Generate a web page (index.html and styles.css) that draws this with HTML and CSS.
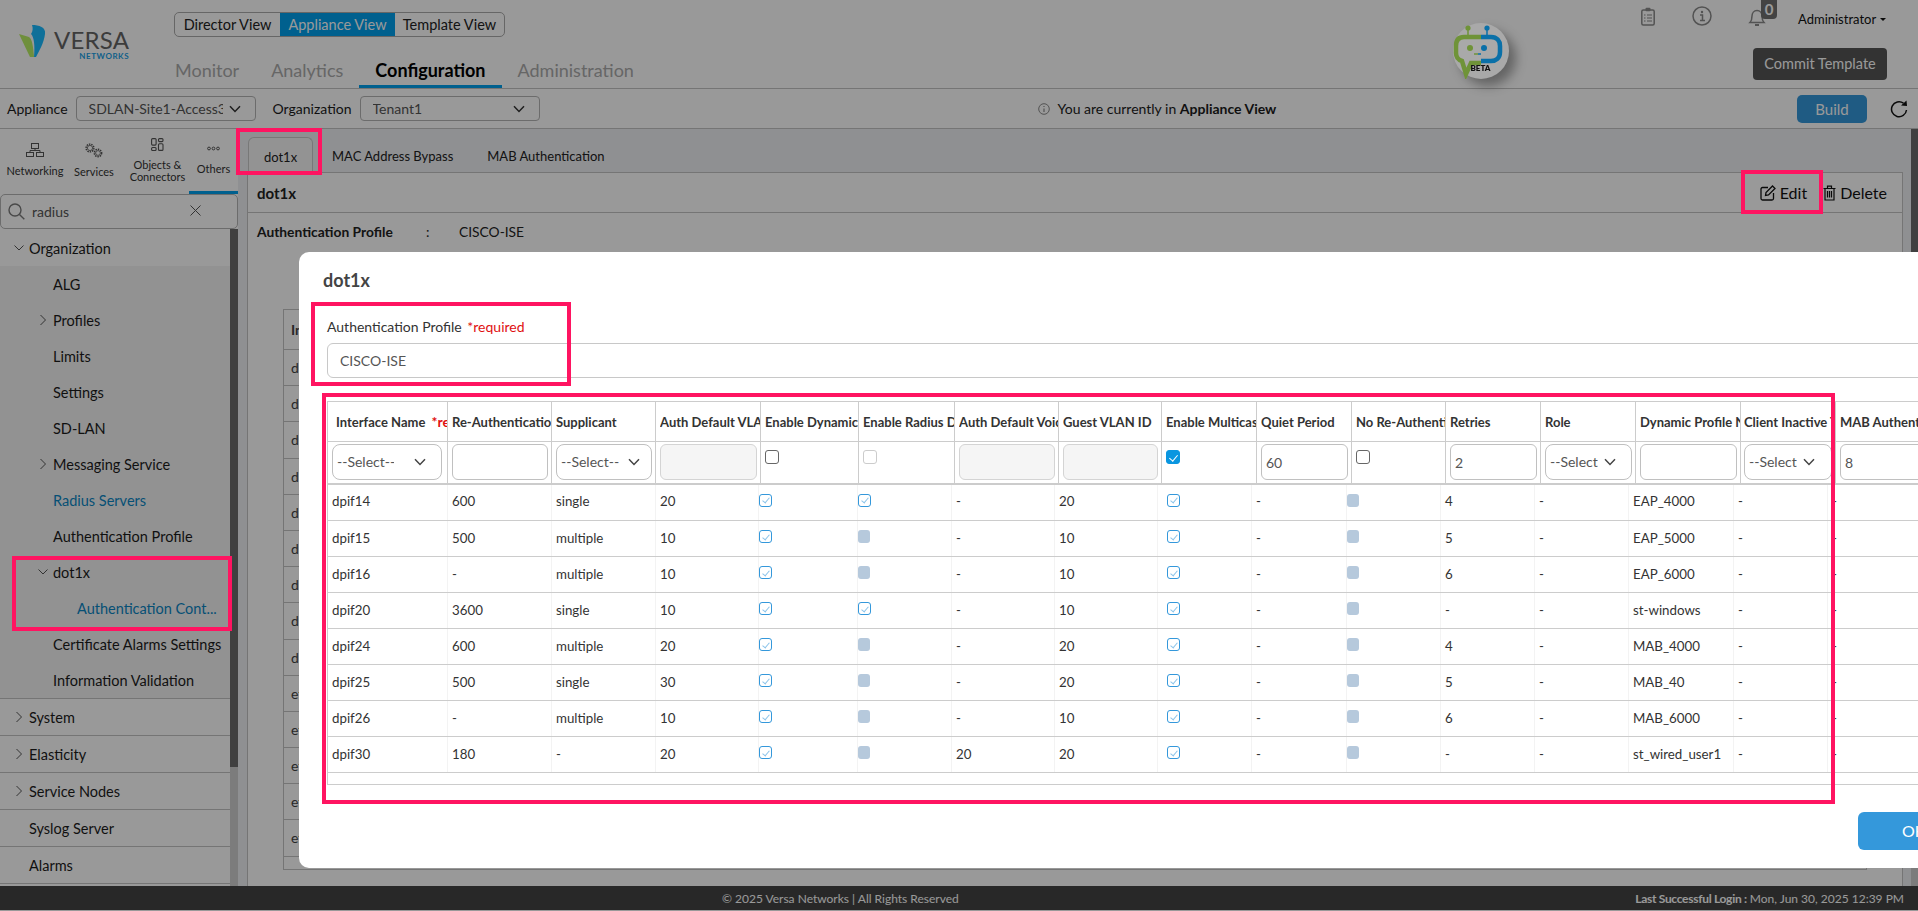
FILE: index.html
```html
<!DOCTYPE html>
<html lang="en">
<head>
<meta charset="utf-8">
<title>Versa Director - dot1x</title>
<link rel="stylesheet" href="styles.css">
</head>
<body>
<svg class="defs" width="0" height="0">
  <symbol id="chev-d" viewBox="0 0 10 6"><path d="M.5.5 5 5 9.5.5" fill="none" stroke="currentColor" stroke-width="1"/></symbol>
  <symbol id="chev-r" viewBox="0 0 10 12"><path d="M2.5 1 7.5 6l-5 5" fill="none" stroke="currentColor" stroke-width="1"/></symbol>
  <symbol id="chev-s" viewBox="0 0 12 8"><path d="M1 1.2 6 6.4l5-5.2" fill="none" stroke="currentColor" stroke-width="1.5"/></symbol>
</svg>
<div class="app">
  <header class="header">
    <div class="brand">
      <svg class="logo-mark" width="28" height="33" viewBox="0 0 28 33"><path d="M0 9 10 12C13 14 14 20 15 32L11 32Z" fill="#b9ee64"/><path d="M13 0C20 0 27 2 26 9 25 18 20 26 17 32L15 32C16 20 15 12 12 9 14 6 14 3 13 0Z" fill="#1abbff"/></svg>
      <div class="logo-text"><span class="logo-versa">VERSA</span><span class="logo-net">NETWORKS</span></div>
    </div>
    <div class="nav">
      <div class="views">
        <span class="view view-a">Director View</span>
        <span class="view view-b active">Appliance View</span>
        <span class="view view-c">Template View</span>
      </div>
      <div class="tabs">
        <span class="tab first">Monitor</span>
        <span class="tab">Analytics</span>
        <span class="tab active">Configuration</span>
        <span class="tab">Administration</span>
      </div>
    </div>
    <div class="bot">
      <svg width="56" height="56" viewBox="0 0 56 56">
        <path d="M15 5V14" stroke="#6f9338" stroke-width="1.5"/>
        <path d="M34 5V14" stroke="#0a70a8" stroke-width="1.5"/>
        <circle cx="15" cy="5" r="2.6" fill="#6f9338"/><circle cx="34" cy="5" r="2.6" fill="#0a70a8"/>
        <path d="M28 14H11C5 14 3 18 3 23V30C3 35 6 37 9 38L13 51 18 40H28" fill="none" stroke="#6f9338" stroke-width="4.5"/>
        <path d="M28 14H38C44 14 47 18 47 23V29C47 35 43 38 38 38H28" fill="none" stroke="#0a70a8" stroke-width="4.5"/>
        <circle cx="17" cy="25" r="3" fill="#6f9338"/><circle cx="31" cy="25" r="3" fill="#0a70a8"/>
        <path d="M21 31H25" stroke="#6f9338" stroke-width="1.5"/><path d="M25 31H28" stroke="#0a70a8" stroke-width="1.5"/>
        <text x="17.500" y="48" class="beta">BETA</text>
      </svg>
    </div>
    <div class="user">
      <div class="user-top">
        <svg class="ico-clip" width="14" height="19" viewBox="0 0 14 19"><rect x=".8" y="3" width="12.400" height="15" rx="1.500" fill="none" stroke="#8a8a8a" stroke-width="1.500"/><rect x="4.500" y=".8" width="5" height="3.500" rx="1" fill="#8a8a8a"/><path d="M3 8h1.500M6 8h5M3 11h1.500M6 11h5M3 14h1.500M6 14h5" stroke="#8a8a8a" stroke-width="1.200"/></svg>
        <svg class="ico-info" width="20" height="20" viewBox="0 0 20 20"><circle cx="10" cy="10" r="9" fill="none" stroke="#8a8a8a" stroke-width="1.500"/><circle cx="10" cy="6" r="1.200" fill="#8a8a8a"/><path d="M8 9h2.500v5M8 14.500h5" fill="none" stroke="#8a8a8a" stroke-width="1.500"/></svg>
        <span class="bell-wrap">
          <svg width="18" height="19" viewBox="0 0 18 19"><path d="M2 14.500h14C14.500 13 14 11 14 8c0-3-2-5.500-5-5.500S4 5 4 8c0 3-.5 5-2 6.500Z" fill="none" stroke="#8a8a8a" stroke-width="1.500"/><path d="M7 17h4" stroke="#8a8a8a" stroke-width="2"/></svg>
          <span class="badge">0</span>
        </span>
        <span class="admin">Administrator<i class="caret-down"></i></span>
      </div>
      <span class="commit">Commit Template</span>
    </div>
  </header>

  <div class="toolbar">
    <label class="tb-label">Appliance</label>
    <div class="tb-select tb-sel-a"><span class="tb-val">SDLAN-Site1-Access3</span><svg width="12" height="8"><use href="#chev-s"/></svg></div>
    <label class="tb-label tb-org">Organization</label>
    <div class="tb-select tb-sel-b"><span class="tb-val">Tenant1</span><svg width="12" height="8"><use href="#chev-s"/></svg></div>
    <div class="notice">
      <svg width="12" height="12" viewBox="0 0 12 12"><circle cx="6" cy="6" r="5.300" fill="none" stroke="#8a8a8a" stroke-width="1"/><path d="M6 3v1M6 5.500V9" stroke="#8a8a8a" stroke-width="1.200"/></svg>
      <span>You are currently in <b>Appliance View</b></span>
    </div>
    <span class="build">Build</span>
    <svg class="refresh" width="18" height="18" viewBox="0 0 18 18"><path d="M13.500 3.200A7.500 7.500 0 1 0 16.500 10" fill="none" stroke="#111" stroke-width="1.500"/><path d="M11 5.500 17 6l-.5-5.500Z" fill="#111"/></svg>
  </div>

  <div class="workspace">
    <aside class="sidebar">
      <div class="side-tabs">
        <div class="side-tab st-net">
          <svg width="18" height="14" viewBox="0 0 18 14" fill="none" stroke="#555" stroke-width="1"><rect x="5.500" y=".5" width="7" height="5"/><path d="M9 5.500V7.500M4 9.500V7.500H14V9.500"/><rect x=".5" y="9.500" width="7" height="4"/><rect x="10.500" y="9.500" width="7" height="4"/></svg>
          <span>Networking</span>
        </div>
        <div class="side-tab st-svc">
          <svg width="18" height="15" viewBox="0 0 18 15" fill="none" stroke="#555"><circle cx="5" cy="5" r="3.900" stroke-width="1.400" stroke-dasharray="1.500 .9"/><circle cx="5" cy="5" r="2.600" stroke-width=".8"/><circle cx="13" cy="10" r="3.700" stroke-width="1.400" stroke-dasharray="1.500 .9"/><circle cx="13" cy="10" r="2.400" stroke-width=".8"/></svg>
          <span>Services</span>
        </div>
        <div class="side-tab st-obj">
          <svg width="13" height="13" viewBox="0 0 13 13" fill="none" stroke="#555" stroke-width="1.100"><rect x=".6" y=".6" width="4.500" height="6.500" rx="1"/><rect x=".6" y="9.500" width="4.500" height="3" rx="1"/><rect x="7.500" y=".6" width="4.500" height="3" rx="1"/><rect x="7.500" y="5.800" width="4.500" height="6.600" rx="1"/></svg>
          <span>Objects &amp; Connectors</span>
        </div>
        <div class="side-tab st-oth active">
          <svg width="13" height="13" viewBox="0 0 13 13" fill="none" stroke="#555" stroke-width="1"><circle cx="2" cy="6.500" r="1.400"/><circle cx="6.500" cy="6.500" r="1.400"/><circle cx="11" cy="6.500" r="1.400"/></svg>
          <span>Others</span>
        </div>
      </div>
      <div class="search">
        <svg width="17" height="17" viewBox="0 0 17 17" fill="none" stroke="#7a7a7a" stroke-width="1.400"><circle cx="7" cy="7" r="6"/><path d="M11.500 11.500 16.300 16.300"/></svg>
        <span class="search-text">radius</span>
        <svg class="search-x" width="11" height="11" viewBox="0 0 11 11" stroke="#555" stroke-width="1"><path d="M.5.5 10.500 10.500M10.500.5.5 10.500"/></svg>
      </div>
      <div class="tree-wrap">
        <nav class="tree">
          <div class="row l1 top"><svg class="chev" width="10" height="6"><use href="#chev-d"/></svg><span>Organization</span></div>
          <div class="group">
            <div class="row l2"><span>ALG</span></div>
            <div class="row l2 has"><svg class="chev" width="10" height="12"><use href="#chev-r"/></svg><span>Profiles</span></div>
            <div class="row l2"><span>Limits</span></div>
            <div class="row l2"><span>Settings</span></div>
            <div class="row l2"><span>SD-LAN</span></div>
            <div class="row l2 has"><svg class="chev" width="10" height="12"><use href="#chev-r"/></svg><span>Messaging Service</span></div>
            <div class="row l2 link"><span>Radius Servers</span></div>
            <div class="row l2"><span>Authentication Profile</span></div>
            <div class="row l2 has"><svg class="chev" width="10" height="6"><use href="#chev-d"/></svg><span>dot1x</span></div>
            <div class="row l3 link"><span>Authentication Cont...</span></div>
            <div class="row l2"><span>Certificate Alarms Settings</span></div>
            <div class="row l2"><span>Information Validation</span></div>
          </div>
          <div class="row l1 has"><svg class="chev" width="10" height="12"><use href="#chev-r"/></svg><span>System</span></div>
          <div class="row l1 has"><svg class="chev" width="10" height="12"><use href="#chev-r"/></svg><span>Elasticity</span></div>
          <div class="row l1 has"><svg class="chev" width="10" height="12"><use href="#chev-r"/></svg><span>Service Nodes</span></div>
          <div class="row l1 has"><i class="chev-gap"></i><span>Syslog Server</span></div>
          <div class="row l1 has"><i class="chev-gap"></i><span>Alarms</span></div>
        </nav>
        <div class="side-scroll"><div class="side-thumb"></div></div>
      </div>
    </aside>

    <main class="main">
      <div class="content-tabs">
        <span class="ctab active">dot1x</span>
        <span class="ctab ctab-mac">MAC Address Bypass</span>
        <span class="ctab ctab-mab">MAB Authentication</span>
      </div>
      <section class="panel">
        <div class="panel-head">
          <h2 class="panel-title">dot1x</h2>
          <span class="action act-edit">
            <svg width="16" height="16" viewBox="0 0 16 16" fill="none" stroke="#111" stroke-width="1.300"><path d="M8 2.500H2.500A1.500 1.500 0 0 0 1 4v9.500A1.500 1.500 0 0 0 2.500 15H12a1.500 1.500 0 0 0 1.500-1.500V8"/><path d="M5.500 10.500 6 7.500 12.500 1l2.500 2.500L8.500 10Z"/></svg>
            Edit
          </span>
          <span class="action act-del">
            <svg width="13" height="16" viewBox="0 0 13 16" fill="none" stroke="#111" stroke-width="1.200"><path d="M.5 3.500h12M4.500 3.500V1.200h4v2.300M2 3.500V15h9V3.500M4.500 6v6.500M6.500 6v6.500M8.500 6v6.500"/></svg>
            Delete
          </span>
        </div>
        <div class="panel-body">
          <div class="summary"><b class="sum-k">Authentication Profile</b><span class="sum-c">:</span><span>CISCO-ISE</span></div>
          <div class="bg-table">
            <div class="bg-row bg-head">Interface Name</div>
            <div class="bg-row">dpif14</div><div class="bg-row">dpif15</div><div class="bg-row">dpif16</div>
            <div class="bg-row">dpif20</div><div class="bg-row">dpif24</div><div class="bg-row">dpif25</div>
            <div class="bg-row">dpif26</div><div class="bg-row">dpif30</div><div class="bg-row">dpif31</div>
            <div class="bg-row">eth-0/1</div><div class="bg-row">eth-0/2</div><div class="bg-row">eth-0/3</div>
            <div class="bg-row">eth-0/4</div><div class="bg-row">eth-0/5</div><div class="bg-stub"></div>
          </div>
        </div>
      </section>
      <div class="main-scroll"><div class="main-thumb"></div></div>
    </main>
  </div>

  <footer class="footer">
    <span class="copy">© 2025 Versa Networks | All Rights Reserved</span>
    <span class="login"><b>Last Successful Login :</b> Mon, Jun 30, 2025 12:39 PM</span>
  </footer>
</div>

<div class="backdrop"></div>

<div class="modal">
  <h3 class="modal-title">dot1x</h3>
  <div class="field-label">Authentication Profile <span class="req">*required</span></div>
  <div class="field-input">CISCO-ISE</div>
  <div class="grid">
    <table class="thead">
      <colgroup><col><col><col><col><col><col><col><col><col><col><col><col><col><col><col><col></colgroup>
      <tr class="hr">
        <th class="th-first"><span>Interface Name <em>*required</em></span></th><th><span>Re-Authentication Timeout</span></th><th><span>Supplicant</span></th><th><span>Auth Default VLAN</span></th>
        <th><span>Enable Dynamic VLAN</span></th><th class="th-radius"><span>Enable Radius Disconnect</span></th><th><span>Auth Default Voice VLAN</span></th><th><span>Guest VLAN ID</span></th>
        <th><span>Enable Multicast</span></th><th><span>Quiet Period</span></th><th><span>No Re-Authentication</span></th><th><span>Retries</span></th>
        <th><span>Role</span></th><th><span>Dynamic Profile Name</span></th><th class="th-client"><span>Client Inactive Timeout</span></th><th><span>MAB Authentication</span></th>
      </tr>
      <tr class="fr">
        <td><div class="ctl sel"><span class="ctl-t">--Select--</span><svg width="12" height="8"><use href="#chev-s"/></svg></div></td>
        <td><div class="ctl"></div></td>
        <td><div class="ctl sel"><span class="ctl-t">--Select--</span><svg width="12" height="8"><use href="#chev-s"/></svg></div></td>
        <td><div class="ctl off"></div></td>
        <td><span class="box"></span></td>
        <td class="th-radius"><span class="box dim"></span></td>
        <td><div class="ctl off"></div></td>
        <td><div class="ctl off"></div></td>
        <td><span class="box fill"></span></td>
        <td><div class="ctl val">60</div></td>
        <td><span class="box"></span></td>
        <td><div class="ctl val">2</div></td>
        <td><div class="ctl sel narrow"><span class="ctl-t">--Select--</span><svg width="12" height="8"><use href="#chev-s"/></svg></div></td>
        <td><div class="ctl"></div></td>
        <td class="th-client"><div class="ctl sel narrow"><span class="ctl-t">--Select--</span><svg width="12" height="8"><use href="#chev-s"/></svg></div></td>
        <td><div class="ctl val">8</div></td>
      </tr>
    </table>
    <table class="tbody">
      <colgroup><col><col><col><col><col><col><col><col><col><col><col><col><col><col><col><col></colgroup>
      <tr><td>dpif14</td><td>600</td><td>single</td><td>20</td><td class="c"><i class="chk"></i></td><td class="c"><i class="chk"></i></td><td>-</td><td>20</td><td class="c m"><i class="chk"></i></td><td>-</td><td class="c"><i class="gry"></i></td><td>4</td><td>-</td><td>EAP_4000</td><td>-</td><td>-</td></tr>
      <tr><td>dpif15</td><td>500</td><td>multiple</td><td>10</td><td class="c"><i class="chk"></i></td><td class="c"><i class="gry"></i></td><td>-</td><td>10</td><td class="c m"><i class="chk"></i></td><td>-</td><td class="c"><i class="gry"></i></td><td>5</td><td>-</td><td>EAP_5000</td><td>-</td><td>-</td></tr>
      <tr><td>dpif16</td><td>-</td><td>multiple</td><td>10</td><td class="c"><i class="chk"></i></td><td class="c"><i class="gry"></i></td><td>-</td><td>10</td><td class="c m"><i class="chk"></i></td><td>-</td><td class="c"><i class="gry"></i></td><td>6</td><td>-</td><td>EAP_6000</td><td>-</td><td>-</td></tr>
      <tr><td>dpif20</td><td>3600</td><td>single</td><td>10</td><td class="c"><i class="chk"></i></td><td class="c"><i class="chk"></i></td><td>-</td><td>10</td><td class="c m"><i class="chk"></i></td><td>-</td><td class="c"><i class="gry"></i></td><td>-</td><td>-</td><td>st-windows</td><td>-</td><td>-</td></tr>
      <tr><td>dpif24</td><td>600</td><td>multiple</td><td>20</td><td class="c"><i class="chk"></i></td><td class="c"><i class="gry"></i></td><td>-</td><td>20</td><td class="c m"><i class="chk"></i></td><td>-</td><td class="c"><i class="gry"></i></td><td>4</td><td>-</td><td>MAB_4000</td><td>-</td><td>-</td></tr>
      <tr><td>dpif25</td><td>500</td><td>single</td><td>30</td><td class="c"><i class="chk"></i></td><td class="c"><i class="gry"></i></td><td>-</td><td>20</td><td class="c m"><i class="chk"></i></td><td>-</td><td class="c"><i class="gry"></i></td><td>5</td><td>-</td><td>MAB_40</td><td>-</td><td>-</td></tr>
      <tr><td>dpif26</td><td>-</td><td>multiple</td><td>10</td><td class="c"><i class="chk"></i></td><td class="c"><i class="gry"></i></td><td>-</td><td>10</td><td class="c m"><i class="chk"></i></td><td>-</td><td class="c"><i class="gry"></i></td><td>6</td><td>-</td><td>MAB_6000</td><td>-</td><td>-</td></tr>
      <tr><td>dpif30</td><td>180</td><td>-</td><td>20</td><td class="c"><i class="chk"></i></td><td class="c"><i class="gry"></i></td><td>20</td><td>20</td><td class="c m"><i class="chk"></i></td><td>-</td><td class="c"><i class="gry"></i></td><td>-</td><td>-</td><td>st_wired_user1</td><td>-</td><td>-</td></tr>
    </table>
    <div class="grid-foot"></div>
  </div>
  <div class="modal-foot"><span class="ok">OK</span></div>
</div>

<div class="mark mark-tab"></div>
<div class="mark mark-edit"></div>
<div class="mark mark-tree"></div>
<div class="mark mark-profile"></div>
<div class="mark mark-grid"></div>
</body>
</html>
```

FILE: styles.css
```css
* { box-sizing: border-box; }
html, body { margin: 0; height: 100%; overflow: hidden; }
body { font-family: Lato, "Open Sans", sans-serif; font-size: 14px; color: #1c1c1c; background: #fff; }
.defs { position: absolute; }
svg { flex: none; }

.app { display: flex; flex-direction: column; height: 911px; }

/* header */
.header { display: flex; height: 89px; border-bottom: 1px solid #c4c4c4; flex: none; background: #fff; }
.brand { width: 174px; padding: 25px 0 0 19px; display: flex; align-items: flex-start; gap: 7px; flex: none; }
.logo-text { display: flex; flex-direction: column; align-items: flex-end; margin-top: 4px; }
.logo-versa { font-size: 24px; line-height: 22px; color: #646464; letter-spacing: .2px; }
.logo-net { font-size: 8px; line-height: 9px; font-weight: 700; color: #1aa0e6; letter-spacing: .55px; margin-top: 1px; }
.nav { display: flex; flex-direction: column; }
.views { display: flex; margin-top: 12px; height: 25px; border: 1px solid #aaa; border-radius: 5px; width: 331px; overflow: hidden; background: #fff; }
.view { display: flex; align-items: center; justify-content: center; font-size: 14.5px; color: #222; }
.view-a { width: 105px; }
.view-b { width: 115px; }
.view-c { flex: 1; }
.view.active { background: #00a0ed; color: #fff; }
.tabs { display: flex; margin-top: 12px; height: 39px; }
.tab { padding: 0 16px; font-size: 18px; line-height: 42px; height: 39px; color: #aaa; }
.tab.first { margin-left: -15px; }
.tab.active { color: #000; font-weight: 700; border-bottom: 3px solid #00a0ed; }
.bot { margin: 23px 131px 0 auto; width: 56px; height: 56px; border-radius: 50%; background: #a9a9a9; box-shadow: 7px 7px 11px rgba(0,0,0,.35); flex: none; z-index: 1; }
.bot svg { display: block; }
.beta { font-size: 8px; font-weight: 800; fill: #111; font-family: Lato, sans-serif; }
.user { width: 247px; margin-right: 31px; flex: none; display: flex; flex-direction: column; align-items: flex-end; }
.user-top { display: flex; align-items: flex-start; width: 100%; height: 48px; }
.ico-clip { margin: 7px 0 0 1px; }
.ico-info { margin: 6px 0 0 37px; }
.bell-wrap { position: relative; margin: 8px 0 0 36px; width: 18px; height: 19px; flex: none; }
.badge { position: absolute; left: 13px; top: -8px; width: 16px; height: 19px; background: #707070; color: #fff; font-size: 15px; font-weight: 700; line-height: 19px; text-align: center; border-radius: 0 0 4px 4px; }
.admin { margin: 11px 0 0 32px; font-size: 13px; line-height: 16px; color: #111; white-space: nowrap; }
.caret-down { display: inline-block; margin-left: 4px; vertical-align: 3px; border: 3px solid transparent; border-top-color: #111; border-bottom: 0; }
.commit { width: 134px; height: 32px; background: #555; color: #fff; border-radius: 4px; font-size: 14.5px; line-height: 32px; text-align: center; }

/* toolbar */
.toolbar { display: flex; align-items: center; height: 40px; padding-left: 7px; border-bottom: 1px solid #c4c4c4; flex: none; background: #fff; }
.tb-label { font-size: 14px; flex: none; }
.tb-org { margin-left: 17px; }
.tb-select { display: flex; align-items: center; height: 25px; border: 1px solid #b4b4b4; border-radius: 4px; color: #555; font-size: 14px; background: #fff; padding: 0 14px 0 12px; flex: none; }
.tb-sel-a { width: 180px; margin-left: 8px; }
.tb-sel-b { width: 180px; margin-left: 8px; }
.tb-val { flex: 1; overflow: hidden; white-space: nowrap; margin-right: 6px; }
.tb-select svg { color: #333; }
.notice { display: flex; align-items: center; gap: 8px; margin-left: 498px; font-size: 14px; }
.notice b { font-weight: 700; }
.build { margin-left: auto; width: 70px; height: 28px; background: #3498db; color: #fff; border-radius: 5px; text-align: center; line-height: 28px; font-size: 15px; }
.refresh { margin: 0 10px 0 23px; }

/* workspace */
.workspace { display: flex; flex: 1; min-height: 0; }
.sidebar { width: 238px; flex: none; display: flex; flex-direction: column; background: #fff; }
.side-tabs { display: flex; height: 65px; flex: none; font-size: 11px; line-height: 12px; color: #333; }
.side-tab { display: flex; flex-direction: column; align-items: center; justify-content: center; gap: 8px; text-align: center; height: 65px; padding-bottom: 3px; }
.st-net { width: 70px; }
.st-svc { width: 48px; }
.st-obj { width: 63px; margin-left: 8px; }
.st-oth { width: 49px; }
.side-tab.active { border-bottom: 3px solid #00a0ed; }
.search { display: flex; align-items: center; height: 35px; flex: none; border: 1px solid #b4b4b4; border-radius: 5px; padding: 0 36px 0 7px; gap: 7px; background: #fff; }
.search-text { flex: 1; font-size: 14px; color: #555; }
.search-x { margin-bottom: 2px; }
.tree-wrap { display: flex; flex: 1; min-height: 0; overflow: hidden; }
.tree { flex: 1; min-width: 0; padding-top: 1px; }
.row { display: flex; align-items: center; height: 36px; font-size: 14.5px; color: #1c1c1c; white-space: nowrap; }
.row.l1 { padding-left: 14px; height: 37px; border-bottom: 1px solid #c4c4c4; }
.row.l1.top { height: 36px; border-bottom: 0; }
.l1 .chev, .l1 .chev-gap { width: 10px; margin-right: 5px; flex: none; }
.l1 .chev { color: #555; }
.group { background: #f3f3f3; border-bottom: 1px solid #c4c4c4; height: 433px; }
.row.l2 { padding-left: 53px; }
.row.l2.has { padding-left: 38px; }
.l2 .chev { margin-right: 5px; color: #555; }
.row.l3 { padding-left: 77px; }
.row.link { color: #0a86c4; }
.side-scroll { width: 8px; flex: none; background: #cfcfcf; }
.side-thumb { height: 538px; background: #6b6b6b; }

/* main */
.main { flex: 1; min-width: 0; background: #eef0f3; display: flex; flex-direction: column; padding: 8px 15px 0 9px; position: relative; }
.content-tabs { display: flex; height: 35px; flex: none; padding-left: 1px; font-size: 13px; }
.ctab { line-height: 38px; white-space: nowrap; color: #222; }
.ctab.active { width: 65px; text-align: center; border: 1px solid #c8c8c8; border-bottom: 0; border-radius: 6px 6px 0 0; background: #f6f6f6; }
.ctab-mac { margin-left: 19px; }
.ctab-mab { margin-left: 34px; }
.panel { flex: 1; min-height: 0; background: #fff; border: 1px solid #c4c4c4; border-bottom: 0; display: flex; flex-direction: column; }
.panel-head { display: flex; align-items: center; height: 40px; flex: none; border-bottom: 1px solid #c4c4c4; padding: 0 15px 0 9px; }
.panel-title { margin: 0; font-size: 15px; font-weight: 700; color: #222; flex: 1; }
.action { display: flex; align-items: center; gap: 4px; font-size: 16px; color: #111; }
.act-del { margin-left: 16px; }
.panel-body { flex: 1; min-height: 0; padding: 0 35px 0 9px; }
.summary { display: flex; font-size: 13.800px; height: 38px; line-height: 38px; color: #222; }
.sum-k { width: 169px; font-weight: 700; }
.sum-c { width: 33px; }
.bg-table { margin: 58px 0 0 26px; border: 1px solid #c4c4c4; height: 561px; overflow: hidden; }
.bg-row { height: 36.200px; line-height: 35px; padding-left: 7px; border-bottom: 1px solid #c4c4c4; color: #444; }
.bg-head { height: 40px; line-height: 40px; font-weight: 700; }
.main-scroll { position: absolute; right: 0; top: 0; bottom: 0; width: 7px; background: #cfcfcf; }
.main-thumb { height: 620px; background: #6b6b6b; }

/* footer */
.footer { display: flex; align-items: center; height: 24px; margin-bottom: 1px; flex: none; background: #444; color: #fff; font-size: 12px; padding: 0 14px 0 722px; }
.copy { flex: 1; }
.login b { font-weight: 700; letter-spacing: -.3px; }

/* modal */
.backdrop { position: fixed; inset: 0; background: rgba(0,0,0,.4); }
.modal { position: fixed; left: 299px; top: 252px; width: 1700px; height: 616px; background: #fff; border-radius: 10px; padding: 0 28px; display: flex; flex-direction: column; }
.modal-title { margin: 15px 0 0 -4px; font-size: 18px; line-height: 26px; font-weight: 700; color: #444; }
.field-label { margin-top: 25px; font-size: 14px; line-height: 18px; color: #333; }
.req { color: #e01010; margin-left: 2px; }
.field-input { margin-top: 7px; height: 35px; border: 1px solid #c8c8c8; border-radius: 6px; padding-left: 12px; line-height: 33px; font-size: 14px; color: #555; flex: none; }
.grid { margin-top: 23px; overflow: hidden; flex: none; }
table { table-layout: fixed; border-collapse: collapse; width: 1608px; }
.thead col:nth-child(1) { width: 120px; }
.thead col:nth-child(2), .thead col:nth-child(3) { width: 104px; }
.thead col:nth-child(4) { width: 105px; }
.thead col:nth-child(5) { width: 98px; }
.thead col:nth-child(6) { width: 96px; }
.thead col:nth-child(7) { width: 104px; }
.thead col:nth-child(8) { width: 103px; }
.thead col:nth-child(9), .thead col:nth-child(10), .thead col:nth-child(12), .thead col:nth-child(13) { width: 95px; }
.thead col:nth-child(11) { width: 94px; }
.thead col:nth-child(14) { width: 105px; }
.thead col:nth-child(15) { width: 95px; }
.thead col:nth-child(16) { width: 100px; }
.tbody col:nth-child(1) { width: 120px; }
.tbody col:nth-child(2), .tbody col:nth-child(3) { width: 104px; }
.tbody col:nth-child(4), .tbody col:nth-child(7), .tbody col:nth-child(8) { width: 103px; }
.tbody col:nth-child(5) { width: 99px; }
.tbody col:nth-child(6), .tbody col:nth-child(9), .tbody col:nth-child(11), .tbody col:nth-child(12), .tbody col:nth-child(13), .tbody col:nth-child(15) { width: 94px; }
.tbody col:nth-child(10) { width: 95px; }
.tbody col:nth-child(14) { width: 105px; }
.tbody col:nth-child(16) { width: 108px; }

.thead { border-top: 1px solid #ccc; }
.hr th { height: 40px; padding: 0 0 0 4px; border: 1px solid #ccc; border-top: 0; text-align: left; font-size: 13px; font-weight: 700; color: #333; white-space: nowrap; overflow: hidden; }
.hr th span { display: block; overflow: hidden; }
.hr .th-first { padding-left: 8px; }
.hr .th-first em { color: #e01010; font-style: normal; margin-left: 3px; font-size: 14px; }
.fr td { height: 42px; padding: 0 0 0 4px; border: 1px solid #ccc; border-bottom: 2px solid #ccc; vertical-align: top; }
.ctl { margin-top: 2px; height: 36px; width: calc(100% - 3px); border: 1px solid #c0c0c0; border-radius: 6px; font-size: 14px; color: #555; line-height: 36px; padding-left: 4px; overflow: hidden; }
.fr td:nth-child(1) .ctl { width: 110px; }
.ctl.off { background: #f5f5f5; border-color: #d4d4d4; }
.ctl.sel { display: flex; align-items: center; padding: 0 11px 0 4px; border-radius: 8px; }
.ctl-t { flex: 1; overflow: hidden; white-space: nowrap; }
.ctl.sel svg { color: #444; margin-left: 4px; }
.ctl.narrow { padding-right: 6px; }
.ctl.narrow .ctl-t { flex: none; width: 48px; }
.ctl.narrow svg { margin-left: 6px; }
.fr td:nth-child(1) .ctl.sel svg { margin-left: 20px; margin-right: 4px; }
.fr .th-client, .hr .th-client { padding-left: 3px; }
.box { display: block; position: relative; margin-top: 8px; width: 14px; height: 14px; border: 1px solid #666; border-radius: 3px; }
.box.dim { border-color: #ccc; }
.box.fill { background: #0a96e0; border-color: #0a96e0; }
.box.fill::after { content: ""; position: absolute; left: 4px; top: 2px; width: 4px; height: 7px; border: solid #fff; border-width: 0 1.5px 1.5px 0; transform: rotate(40deg); }

.tbody td { height: 36px; padding: 0 0 2px 4px; border: 1px solid #f3f3f3; border-bottom: 1px solid #ccc; border-top: 0; font-size: 13.300px; color: #333; white-space: nowrap; overflow: hidden; }
.tbody td.c { padding-left: 0; padding-bottom: 4px; }
.tbody td.m { padding-left: 9px; }
.tbody tr td:first-child { border-left: 1px solid #ccc; }
.chk, .gry { display: block; position: relative; width: 13px; height: 13px; border-radius: 3px; }
.chk { border: 1px solid #3498db; }
.chk::after { content: ""; position: absolute; left: 3.500px; top: 1.500px; width: 3px; height: 6px; border: solid #8cc4ea; border-width: 0 1px 1px 0; transform: rotate(40deg); }
.gry { background: #b6c9dc; width: 12px; }
.grid-foot { height: 12px; border-left: 1px solid #ccc; border-bottom: 1px solid #ccc; }
.modal-foot { margin-top: 27px; padding-left: 1531px; }
.ok { display: block; width: 100px; height: 38px; background: #3498db; color: #fff; border-radius: 6px; line-height: 38px; font-size: 16px; padding-left: 44px; }

/* annotation boxes */
.mark { position: fixed; border: 4px solid #ff1461; }
.mark-tab { left: 236px; top: 128px; width: 86px; height: 47px; }
.mark-edit { left: 1741px; top: 170px; width: 82px; height: 44px; }
.mark-tree { left: 12px; top: 556px; width: 220px; height: 75px; }
.mark-profile { left: 311px; top: 302px; width: 260px; height: 84px; }
.mark-grid { left: 322px; top: 393px; width: 1513px; height: 411px; }
```
